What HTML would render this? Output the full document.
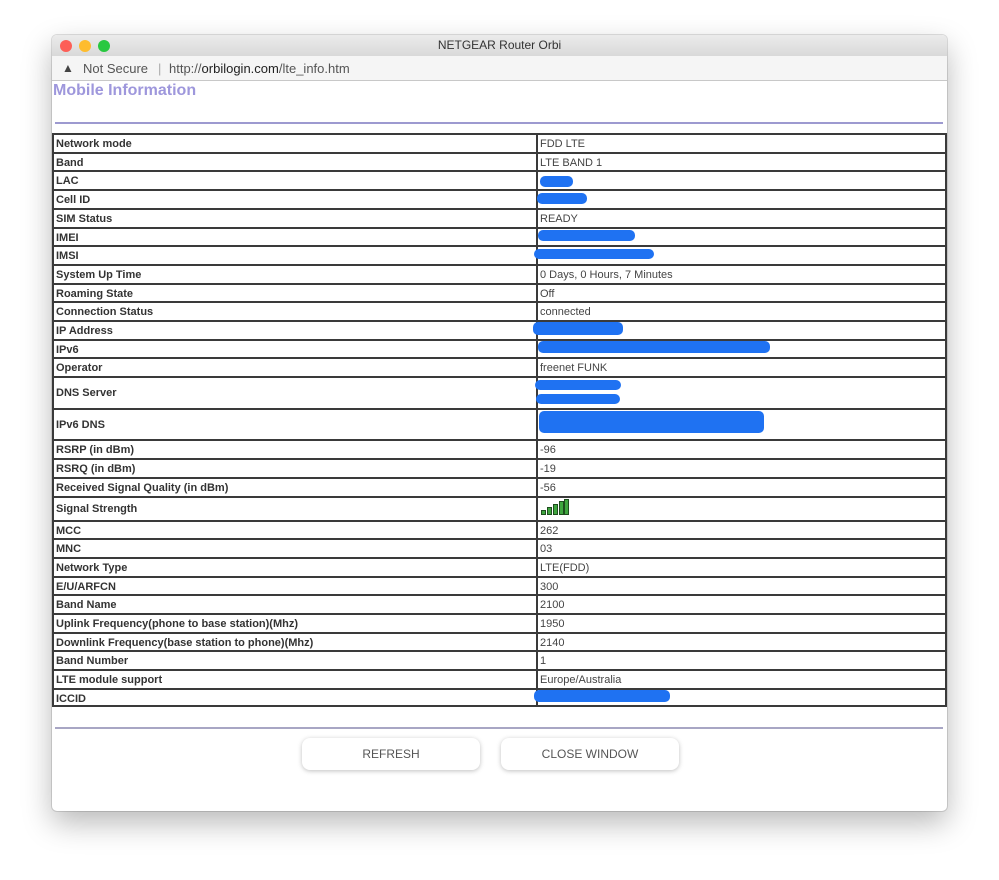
<!DOCTYPE html>
<html><head><meta charset="utf-8"><style>
*{margin:0;padding:0;box-sizing:border-box}
body{width:999px;height:880px;background:#fff;position:relative;font-family:"Liberation Sans",Arial,sans-serif;overflow:hidden}
.win{position:absolute;left:52px;top:35px;width:895px;height:776px;background:#fff;border-radius:5px;box-shadow:0 12px 30px rgba(0,0,0,.28),0 0 0 1px rgba(0,0,0,.12);overflow:hidden}
.tb{position:absolute;left:0;top:0;width:100%;height:21px;background:linear-gradient(#ebebeb,#d9d9d9);text-align:center;font-size:12px;line-height:21px;color:#333}
.dot{position:absolute;top:5px;width:12px;height:12px;border-radius:50%}
.ab{position:absolute;left:0;top:21px;width:100%;height:25px;background:#f5f5f5;border-bottom:1px solid #c8c8c8;font-size:13px;line-height:25px;color:#555}
.r{position:absolute;left:52px;width:895px;border-top:2px solid #3a3a3a;font-size:11px;color:#444}
.r b{position:absolute;left:4px;color:#333}
.r span{position:absolute;left:488px}
.vl{position:absolute;width:2px;background:#3a3a3a;top:133px;height:574px}
.bl{position:absolute;background:#1f72f2;border-radius:5px}
.btn{position:absolute;top:738px;height:32px;width:178px;border-radius:8px;background:#fff;box-shadow:0 1px 5px rgba(0,0,0,.25);font-size:12px;color:#555;text-align:center;line-height:32px}
</style></head><body>
<div class="win">
<div class="tb">NETGEAR Router Orbi
<div class="dot" style="left:8px;background:#fd5f57"></div>
<div class="dot" style="left:27px;background:#febc2e"></div>
<div class="dot" style="left:46px;background:#28c840"></div></div>
<div class="ab"><span style="position:absolute;left:10px;font-size:12px;color:#444">&#9650;</span><span style="position:absolute;left:31px">Not Secure</span><span style="position:absolute;left:106px;color:#aaa">|</span><span style="position:absolute;left:117px">http://<span style="color:#222">orbilogin.com</span>/lte_info.htm</span></div>
</div>
<div style="position:absolute;left:53px;top:82px;font-size:16px;font-weight:bold;color:#9e97dc">Mobile Information</div>
<div style="position:absolute;left:55px;top:122px;width:888px;height:2px;background:#9d9ad0"></div>

<div class="r" style="top:133px;height:19px"><b style="top:3px">Network mode</b><span style="top:3px">FDD LTE</span></div>
<div class="r" style="top:151.7px;height:19px"><b style="top:3px">Band</b><span style="top:3px">LTE BAND 1</span></div>
<div class="r" style="top:170.4px;height:19px"><b style="top:3px">LAC</b></div>
<div class="r" style="top:189.1px;height:19px"><b style="top:3px">Cell ID</b></div>
<div class="r" style="top:207.8px;height:19px"><b style="top:3px">SIM Status</b><span style="top:3px">READY</span></div>
<div class="r" style="top:226.5px;height:19px"><b style="top:3px">IMEI</b></div>
<div class="r" style="top:245.2px;height:19px"><b style="top:3px">IMSI</b></div>
<div class="r" style="top:263.9px;height:19px"><b style="top:3px">System Up Time</b><span style="top:3px">0 Days, 0 Hours, 7 Minutes</span></div>
<div class="r" style="top:282.6px;height:19px"><b style="top:3px">Roaming State</b><span style="top:3px">Off</span></div>
<div class="r" style="top:301.3px;height:19px"><b style="top:3px">Connection Status</b><span style="top:3px">connected</span></div>
<div class="r" style="top:320px;height:19px"><b style="top:3px">IP Address</b></div>
<div class="r" style="top:338.7px;height:19px"><b style="top:3px">IPv6</b></div>
<div class="r" style="top:357.4px;height:19px"><b style="top:3px">Operator</b><span style="top:3px">freenet FUNK</span></div>
<div class="r" style="top:376.1px;height:32px"><b style="top:9px">DNS Server</b></div>
<div class="r" style="top:408px;height:32px"><b style="top:9px">IPv6 DNS</b></div>
<div class="r" style="top:439.4px;height:19px"><b style="top:3px">RSRP (in dBm)</b><span style="top:3px">-96</span></div>
<div class="r" style="top:458.1px;height:19px"><b style="top:3px">RSRQ (in dBm)</b><span style="top:3px">-19</span></div>
<div class="r" style="top:476.8px;height:19px"><b style="top:3px">Received Signal Quality (in dBm)</b><span style="top:3px">-56</span></div>
<div class="r" style="top:495.5px;height:24px"><b style="top:5px">Signal Strength</b></div>
<div class="r" style="top:519.5px;height:19px"><b style="top:3px">MCC</b><span style="top:3px">262</span></div>
<div class="r" style="top:538.2px;height:19px"><b style="top:3px">MNC</b><span style="top:3px">03</span></div>
<div class="r" style="top:556.9px;height:19px"><b style="top:3px">Network Type</b><span style="top:3px">LTE(FDD)</span></div>
<div class="r" style="top:575.6px;height:19px"><b style="top:3px">E/U/ARFCN</b><span style="top:3px">300</span></div>
<div class="r" style="top:594.3px;height:19px"><b style="top:3px">Band Name</b><span style="top:3px">2100</span></div>
<div class="r" style="top:613px;height:19px"><b style="top:3px">Uplink Frequency(phone to base station)(Mhz)</b><span style="top:3px">1950</span></div>
<div class="r" style="top:631.7px;height:19px"><b style="top:3px">Downlink Frequency(base station to phone)(Mhz)</b><span style="top:3px">2140</span></div>
<div class="r" style="top:650.4px;height:19px"><b style="top:3px">Band Number</b><span style="top:3px">1</span></div>
<div class="r" style="top:669.1px;height:19px"><b style="top:3px">LTE module support</b><span style="top:3px">Europe/Australia</span></div>
<div class="r" style="top:687.8px;height:19px;border-bottom:2px solid #3a3a3a"><b style="top:3px">ICCID</b></div>
<div class="vl" style="left:52px"></div><div class="vl" style="left:536px"></div><div class="vl" style="left:945px"></div>

<div class="bl" style="left:540px;top:176px;width:33px;height:11px"></div>
<div class="bl" style="left:537px;top:193px;width:50px;height:11px"></div>
<div class="bl" style="left:538px;top:230px;width:97px;height:11px"></div>
<div class="bl" style="left:534px;top:249px;width:120px;height:10px"></div>
<div class="bl" style="left:533px;top:322px;width:90px;height:13px"></div>
<div class="bl" style="left:538px;top:341px;width:232px;height:12px"></div>
<div class="bl" style="left:535px;top:380px;width:86px;height:10px"></div>
<div class="bl" style="left:536px;top:394px;width:84px;height:10px"></div>
<div class="bl" style="left:539px;top:411px;width:225px;height:22px"></div>
<div class="bl" style="left:534px;top:690px;width:136px;height:12px"></div>
<svg style="position:absolute;left:540px;top:499px" width="30" height="17"><g fill="#3fa63f" stroke="#1e4d1e" stroke-width="1"><rect x="1.5" y="11.5" width="4" height="4"/><rect x="7.5" y="8.5" width="4" height="7"/><rect x="13.5" y="5.5" width="4" height="10"/><rect x="19.5" y="2.5" width="4" height="13"/><rect x="24.5" y="0.5" width="4" height="15"/></g></svg>

<div style="position:absolute;left:55px;top:727px;width:888px;height:2px;background:#a8a6c4"></div>
<div class="btn" style="left:302px">REFRESH</div>
<div class="btn" style="left:501px">CLOSE WINDOW</div>
</body></html>
